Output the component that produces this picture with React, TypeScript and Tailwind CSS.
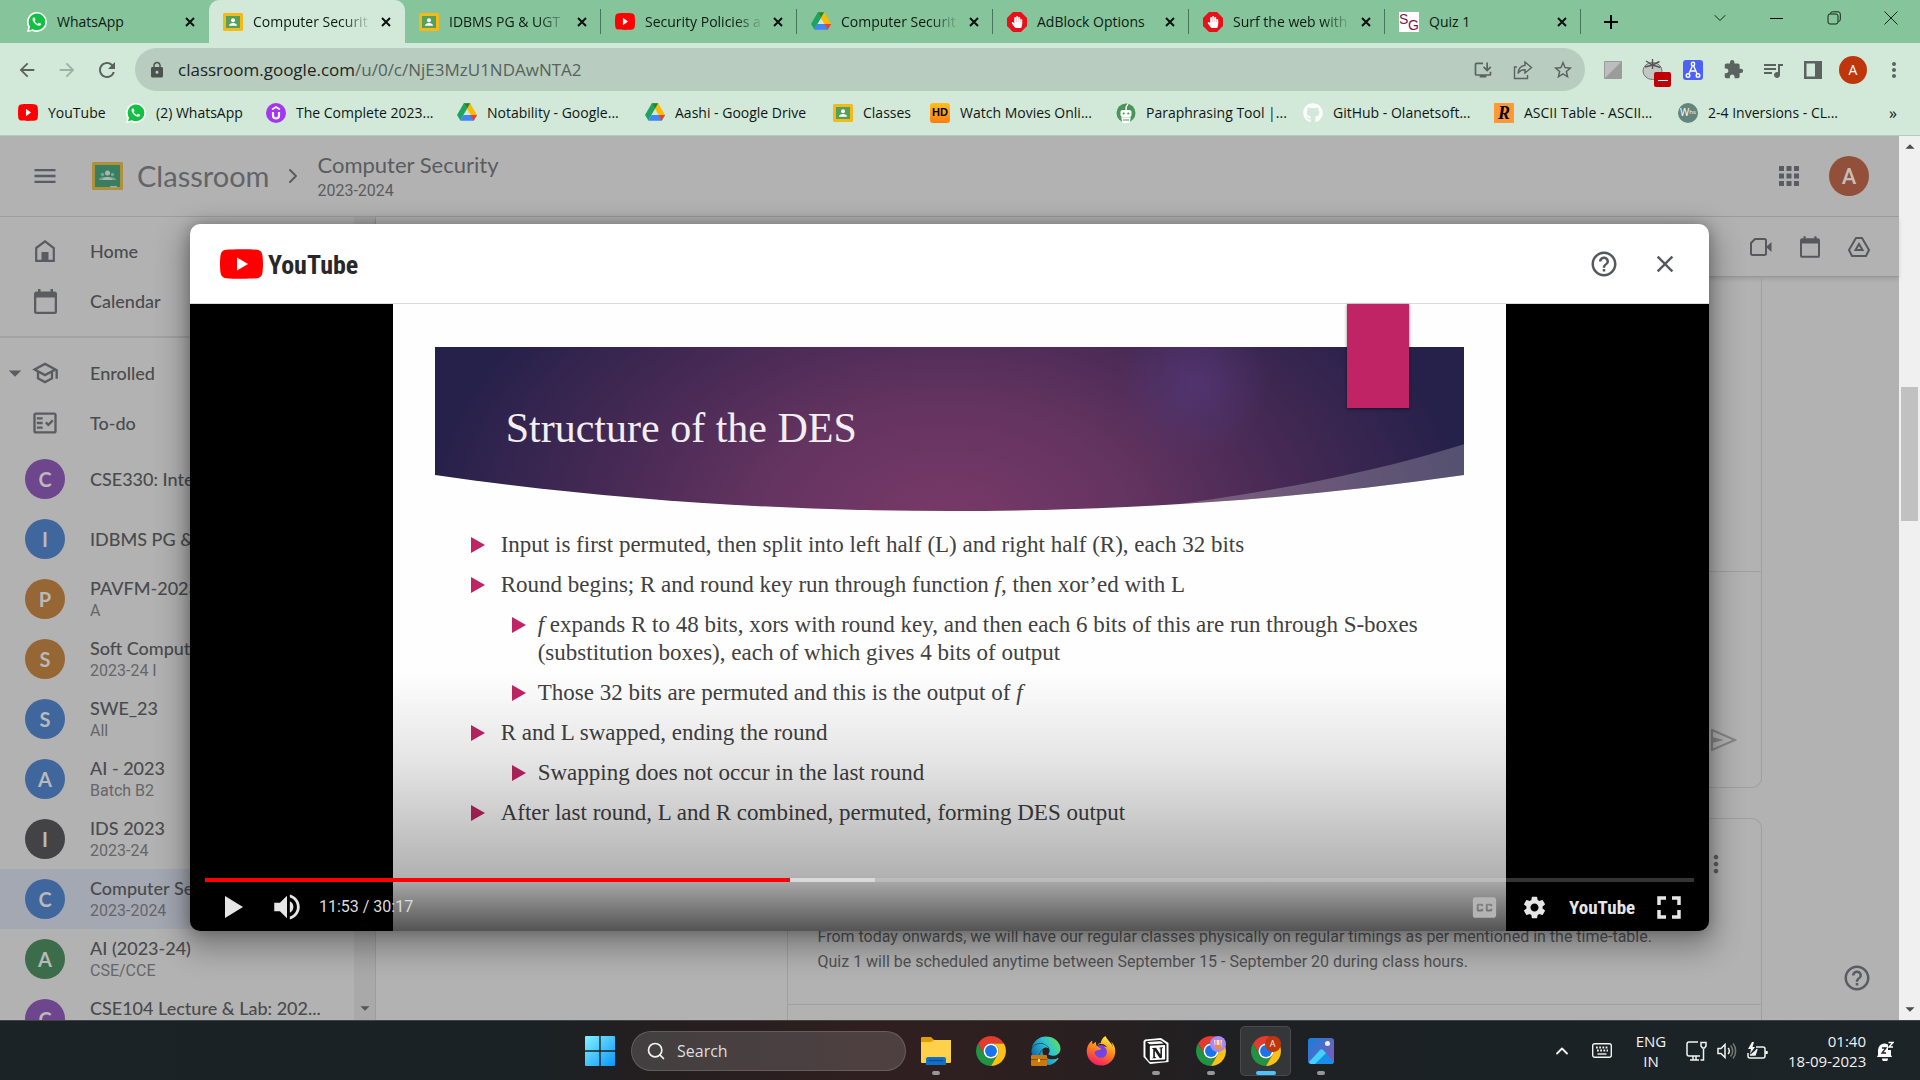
import React from "react";
import {
  MdMenu, MdApps, MdOutlineSchool, MdOutlineFactCheck, MdHelpOutline, MdClose, MdSettings,
  MdVolumeUp, MdClosedCaption, MdArrowBack, MdArrowForward, MdRefresh, MdLock,
  MdStarBorder, MdInstallDesktop, MdExtension, MdQueueMusic, MdMoreVert, MdArrowDropDown,
  MdArrowDropUp, MdAdd,
} from "react-icons/md";
import { FaFirefoxBrowser, FaEdge, FaGithub, FaHandPaper } from "react-icons/fa";
import { SiNotion } from "react-icons/si";
import { ChevronDown, ChevronUp, ChevronRight, Search } from "lucide-react";

const ui = "font-['Open_Sans','Noto_Sans',sans-serif]";
const gs = "font-[Lato,sans-serif]";

/* ---------- small logos ---------- */

function YouTubeMark({ className = "w-5 h-[17px]" }: { className?: string }) {
  return (
    <svg viewBox="0 0 43 30" preserveAspectRatio="none" className={className}>
      <path d="M6 .8C13 0 30 0 37 .8c3 .3 5 2.200 5.400 5.200.8 5 .8 13 0 18-.4 3-2.400 4.900-5.400 5.200-7 .8-24 .8-31 0-3-.3-5-2.200-5.400-5.200-.8-5-.8-13 0-18C1 3 3 1.100 6 .8Z" fill="#f00" />
      <path d="M17 8.500 28 15l-11 6.500Z" fill="#fff" />
    </svg>
  );
}

function WhatsApp() {
  return (
    <svg viewBox="0 0 20 20" className="size-5">
      <path d="M10 0a10 10 0 0 1 0 20c-1.700 0-3-.4-4.500-1.100L0 20l1.300-5A10 10 0 0 1 10 0Z" fill="#fff" />
      <path d="M10 1.500a8.400 8.400 0 0 1 0 16.800c-1.500 0-2.900-.4-4.200-1.100l-3.700 1 1-3.600A8.400 8.400 0 0 1 10 1.500Z" fill="#12c143" />
      <path d="M7 5.200c-.5 0-1.500.8-1.500 2.100 0 1.500 1.300 3.300 2.500 4.500 1.400 1.300 2.800 2 4.100 2 1.200 0 2.200-.9 2.200-1.700 0-.3-2-1.300-2.300-1.300-.4 0-.9 1.200-1.300 1.200-.5 0-3-2.200-3-2.900 0-.3.800-.9.800-1.300C8.500 7.400 7.600 5.200 7 5.200Z" fill="#fff" />
    </svg>
  );
}

function Drive() {
  return (
    <svg viewBox="0 0 24 22" className="h-[19px] w-5">
      <path d="M8.200 0h7.600L12 6.700 4 20.500 0 14Z" fill="#1ea362" />
      <path d="M8.200 0h7.600L24 14h-7.800Z" fill="#ffba00" />
      <path d="M8.200 0h7.600L12 6.600Z" fill="#0f8a48" />
      <path d="M7.800 14H24l-4 7H3.800Z" fill="#4285f4" />
      <path d="M16.200 14H24l-4 7Z" fill="#ea4335" />
      <path d="M7.800 14 12 7l4.200 7Z" className="fill-[#d2e8d9]" />
    </svg>
  );
}

function ClassroomIcon({ dim = false }: { dim?: boolean }) {
  if (dim)
    return (
      <svg viewBox="0 0 31 28" className="h-7 w-[31px]">
        <rect width="31" height="28" rx="1.500" fill="#b0913a" />
        <rect x="3" y="3" width="25" height="22" fill="#387f62" />
        <circle cx="15.500" cy="11" r="2.500" fill="#b2b2b2" />
        <circle cx="10.500" cy="12.500" r="1.700" fill="#7ba291" />
        <circle cx="20.500" cy="12.500" r="1.700" fill="#7ba291" />
        <path d="M7 18c0-3 5-3 8.500-3s8.500 0 8.500 3Z" fill="#7ba291" />
        <path d="M10.500 18c0-4 10-4 10 0Z" fill="#b2b2b2" />
        <path d="M18 24h7v1.500h-7Z" fill="#a9a9a9" />
      </svg>
    );
  return (
    <svg viewBox="0 0 20 18" className="h-[18px] w-5">
      <rect width="20" height="18" rx="1.500" fill="#f5ba15" />
      <rect x="3" y="3" width="14" height="12" fill="#57a05c" />
      <circle cx="10" cy="7.300" r="2" fill="#fff" />
      <path d="M6 12.700c0-3.600 8-3.600 8 0Z" fill="#fff" />
    </svg>
  );
}

function AdBlock() {
  return (
    <span className="relative flex size-5 items-center justify-center">
      <svg viewBox="0 0 20 20" className="size-5">
        <path d="M6 0h8l6 6v8l-6 6H6l-6-6V6Z" fill="#e8101a" />
      </svg>
      <FaHandPaper className="absolute size-3 text-white" />
    </span>
  );
}

function SG() {
  return (
    <span className="relative block size-5 bg-white font-['Liberation_Sans',sans-serif] text-[14px] leading-none text-[#7a1450]">
      <span className="absolute left-0 top-0">S</span>
      <span className="absolute bottom-0 right-0">G</span>
    </span>
  );
}

function Udemy() {
  return (
    <svg viewBox="0 0 20 20" className="size-5">
      <circle cx="10" cy="10" r="10" fill="#a435f0" />
      <path d="M6 6.500 10 4l4 2.500" stroke="#fff" strokeWidth="1.700" fill="none" />
      <path d="M7 9v3.500a3 3 0 0 0 6 0V9" stroke="#fff" strokeWidth="2.200" fill="none" />
    </svg>
  );
}

function Robot() {
  return (
    <svg viewBox="0 0 20 20" className="size-5">
      <circle cx="10" cy="10" r="9.500" fill="#499557" />
      <rect x="4.500" y="7" width="11" height="7" rx="2" fill="#fff" />
      <path d="M10 7V4l2-3M6 15h8l-1 5H7Z" stroke="#fff" strokeWidth="1.300" fill="#fff" />
      <circle cx="7.700" cy="10.500" r="1.100" fill="#499557" />
      <circle cx="12.300" cy="10.500" r="1.100" fill="#499557" />
      <path d="M7 17h6" stroke="#499557" />
    </svg>
  );
}

function Chrome() {
  return (
    <svg viewBox="0 0 48 48" className="size-[30px]">
      <path d="M24 12h20.780A24 24 0 0 0 3.220 12l10.390 18A12 12 0 0 1 24 12Z" fill="#e33b2e" />
      <path d="M13.610 30 3.220 12A24 24 0 0 0 24 48l10.390-18a12 12 0 0 1-20.780 0Z" fill="#229342" />
      <path d="M34.390 30 24 48a24 24 0 0 0 20.780-36H24a12 12 0 0 1 10.390 18Z" fill="#fbc116" />
      <circle cx="24" cy="24" r="12" fill="#fff" />
      <circle cx="24" cy="24" r="9.500" fill="#1a73e8" />
    </svg>
  );
}

/* ---------- browser chrome ---------- */

const tabs: { icon: React.ReactNode; label: string; active?: boolean; line?: boolean; fade?: boolean }[] = [
  { icon: <WhatsApp />, label: "WhatsApp" },
  { icon: <ClassroomIcon />, label: "Computer Securit", active: true, fade: true },
  { icon: <ClassroomIcon />, label: "IDBMS PG & UGT", line: true, fade: true },
  { icon: <YouTubeMark />, label: "Security Policies a", line: true, fade: true },
  { icon: <Drive />, label: "Computer Securit", line: true, fade: true },
  { icon: <AdBlock />, label: "AdBlock Options", line: true },
  { icon: <AdBlock />, label: "Surf the web with", line: true, fade: true },
  { icon: <SG />, label: "Quiz 1", line: true },
];

function TabStrip() {
  return (
    <div className="flex h-[43px] shrink-0 bg-[#86c49c] pl-[13px] text-[14px] text-[#0d1a12]">
      {tabs.map((t, i) => (
        <div
          key={i}
          className={
            t.active
              ? "relative flex w-[196px] items-center rounded-t-[10px] bg-[#d2e8d9] pl-[14px] pr-[9px]"
              : "relative flex w-[196px] items-center pl-[14px] pr-[9px]"
          }
        >
          {t.icon}
          <button
            className={
              t.fade
                ? "ml-[10px] min-w-0 flex-1 whitespace-nowrap text-left [mask-image:linear-gradient(to_right,black_75%,transparent)]"
                : "ml-[10px] min-w-0 flex-1 whitespace-nowrap text-left"
            }
          >
            {t.label}
          </button>
          <button aria-label="Close tab" className="ml-1 flex size-5 items-center justify-center">
            <svg viewBox="0 0 10 10" className="size-[10px]">
              <path d="m1 1 8 8M9 1 1 9" stroke="#0a0f0c" strokeWidth="1.900" />
            </svg>
          </button>
          {t.line && <span className="absolute right-0 top-[9px] h-[25px] w-px bg-[#46755a]" />}
        </div>
      ))}
      <button aria-label="New tab" className="ml-4 flex w-7 items-center justify-center">
        <MdAdd className="size-6 text-black" />
      </button>
      <div className="ml-auto flex h-9 text-[#16251b]">
        <button aria-label="Search tabs" className="flex w-[57px] items-center justify-center">
          <ChevronDown className="size-5" strokeWidth={1.2} />
        </button>
        <button aria-label="Minimize" className="flex w-[57px] items-center justify-center">
          <span className="h-px w-[13px] bg-black" />
        </button>
        <button aria-label="Restore" className="flex w-[57px] items-center justify-center">
          <svg viewBox="0 0 14 14" className="size-[14px]" fill="none" stroke="currentColor">
            <rect x="1" y="3" width="10" height="10" rx="2" />
            <path d="M3.500 3V2.500A2 2 0 0 1 5.500.8H11a2.300 2.300 0 0 1 2.300 2.300V8.500a2 2 0 0 1-1.800 2" />
          </svg>
        </button>
        <button aria-label="Close" className="flex w-[58px] items-center justify-center">
          <svg viewBox="0 0 14 14" className="size-[14px]" stroke="currentColor">
            <path d="m.5.5 13 13M13.500.5l-13 13" />
          </svg>
        </button>
      </div>
    </div>
  );
}

function Toolbar() {
  const ib = "flex w-10 items-center justify-center";
  return (
    <div className="flex h-[53px] shrink-0 items-center bg-[#d2e8d9] pl-[7px] text-[#5b6360]">
      <button aria-label="Back" className={ib}><MdArrowBack className="size-[22px]" /></button>
      <button aria-label="Forward" className={ib}><MdArrowForward className="size-[22px] text-[#9fafa6]" /></button>
      <button aria-label="Reload" className={ib}><MdRefresh className="size-6" /></button>
      <form className="ml-2 flex h-[43px] flex-1 items-center rounded-full bg-[#b8cdc0] pl-[13px] pr-[2px]">
        <MdLock className="size-[18px] text-[#4b5250]" />
        <div className="ml-3 flex-1 text-[17px]">
          <span className="text-[#1c2420]">classroom.google.com</span>
          <span className="text-[#56625b]">/u/0/c/NjE3MzU1NDAwNTA2</span>
        </div>
        <button type="button" aria-label="Install" className={ib}><MdInstallDesktop className="size-5" /></button>
        <button type="button" aria-label="Share" className={ib}>
          <svg viewBox="0 0 20 20" className="size-5" fill="none" stroke="currentColor" strokeWidth="1.400">
            <path d="M4 7H1.500v11.500h13V15M12 2l6.500 5.500L12 13V9.800c-3.500 0-5.500 1-7 3.700.3-4 2.500-7.500 7-8.200Z" />
          </svg>
        </button>
        <button type="button" aria-label="Bookmark" className={ib}><MdStarBorder className="size-[22px]" /></button>
      </form>
      <div className="flex items-center">
        <button aria-label="Extension" className="flex w-12 items-center justify-center pl-2">
          <svg viewBox="0 0 18 18" className="size-[18px]">
            <rect width="18" height="18" rx="1" fill="#9b9b9b" />
            <path d="M1 17V1h16Z" fill="#bdbdbd" />
          </svg>
        </button>
        <button aria-label="Tomato timer" className="relative flex w-10 items-center justify-center">
          <svg viewBox="0 0 22 22" className="size-[22px]">
            <ellipse cx="10.500" cy="12" rx="9.500" ry="8.500" fill="#c3c7c4" stroke="#777" />
            <path d="M10.500 6V0M10.500 6 4 2M10.500 6l7-3.500M10.500 6 3 8M10.500 6l8 2.500M10.500 6v4" stroke="#555" strokeWidth="1.400" />
          </svg>
          <span className="absolute -bottom-[6px] right-[2px] flex h-[15px] w-[17px] items-center justify-center rounded-[2px] bg-[#bf0007]">
            <span className="mt-[3px] h-px w-[10px] bg-white" />
          </span>
        </button>
        <button aria-label="Mercury" className={ib}>
          <svg viewBox="0 0 20 20" className="size-5">
            <rect width="20" height="20" rx="3" fill="#4c62f5" />
            <g fill="none" stroke="#fff" strokeWidth="1.400">
              <circle cx="10" cy="4" r="1.700" /><circle cx="5" cy="15.500" r="1.800" /><circle cx="15" cy="15.500" r="1.800" />
              <path d="M9.400 5.700 6 13.800M10.600 5.700l3.400 8.100M7 11h6" />
            </g>
          </svg>
        </button>
        <button aria-label="Extensions" className={ib}><MdExtension className="size-[21px]" /></button>
        <button aria-label="Media" className={ib}><MdQueueMusic className="size-6" /></button>
        <button aria-label="Side panel" className={ib}>
          <svg viewBox="0 0 18 18" className="size-[18px]">
            <path fillRule="evenodd" d="M0 0h18v18H0Zm2.500 2.500v13H11v-13Z" fill="currentColor" />
          </svg>
        </button>
        <button aria-label="Profile" className="ml-[6px] flex size-7 items-center justify-center rounded-full bg-[#bf360c] text-[14px] text-white">A</button>
        <button aria-label="Menu" className="flex w-[53px] items-center justify-center"><MdMoreVert className="size-6" /></button>
      </div>
    </div>
  );
}

const bookmarks: { icon: React.ReactNode; label: string; w: string }[] = [
  { icon: <YouTubeMark />, label: "YouTube", w: "w-[108px]" },
  { icon: <WhatsApp />, label: "(2) WhatsApp", w: "w-[140px]" },
  { icon: <Udemy />, label: "The Complete 2023...", w: "w-[191px]" },
  { icon: <Drive />, label: "Notability - Google...", w: "w-[188px]" },
  { icon: <Drive />, label: "Aashi - Google Drive", w: "w-[188px]" },
  { icon: <ClassroomIcon />, label: "Classes", w: "w-[97px]" },
  {
    icon: <span className="flex h-5 w-5 items-center justify-center rounded-[3px] bg-gradient-to-b from-[#ffc01c] to-[#ff7a12] font-['Liberation_Sans',sans-serif] text-[11px] font-bold text-black">HD</span>,
    label: "Watch Movies Onli...", w: "w-[186px]",
  },
  { icon: <Robot />, label: "Paraphrasing Tool |...", w: "w-[187px]" },
  { icon: <FaGithub className="size-5 text-white" />, label: "GitHub - Olanetsoft...", w: "w-[191px]" },
  {
    icon: <span className="flex size-5 items-center justify-center bg-[#ff9933] font-['Liberation_Serif',serif] text-[18px] font-bold italic leading-none text-black">R</span>,
    label: "ASCII Table - ASCII...", w: "w-[184px]",
  },
  {
    icon: <span className="flex size-5 items-center justify-center rounded-full bg-[#64857c] text-[10px] text-white">W<span className="text-[6px]">hs</span></span>,
    label: "2-4 Inversions - CL...", w: "w-[170px]",
  },
];

function BookmarksBar() {
  return (
    <div className="flex h-[40px] shrink-0 items-center border-b border-[#b5c9bc] bg-[#d2e8d9] pb-[6px] pl-[18px] text-[14px] text-[#101713]">
      {bookmarks.map((b) => (
        <a key={b.label} href="#" className={`flex shrink-0 items-center gap-[10px] whitespace-nowrap ${b.w}`}>
          <span className="flex w-5 shrink-0 justify-center">{b.icon}</span>
          {b.label}
        </a>
      ))}
      <button aria-label="More bookmarks" className="ml-auto mr-[23px] text-[16px]">»</button>
    </div>
  );
}

/* ---------- classroom page ---------- */

function Header() {
  return (
    <header className="flex h-[81px] shrink-0 items-center border-b border-[#9d9d9d] pl-[31px] text-[#5a5c60]">
      <button aria-label="Main menu"><MdMenu className="size-7" /></button>
      <span className="ml-[33px]"><ClassroomIcon dim /></span>
      <a href="#" className={`ml-[14px] text-[29px] text-[#626467] ${gs}`}>Classroom</a>
      <ChevronRight className="ml-3 size-6" strokeWidth={2} />
      <div className="ml-3 pt-px">
        <h1 className={`text-[22px] leading-7 ${gs}`}>Computer Security</h1>
        <p className="font-[Roboto,sans-serif] text-[16px] leading-6">2023-2024</p>
      </div>
      <button aria-label="Google apps" className="ml-auto mr-[25px]"><MdApps className="size-[30px]" /></button>
      <button aria-label="Account" className="mr-[30px] flex size-10 items-center justify-center rounded-full bg-[#924f3a] font-[Roboto,sans-serif] text-[22px] font-medium text-[#c9bdb9]">A</button>
    </header>
  );
}

const courses = [
  { l: "C", c: "bg-[#6d468e]", name: "CSE330: Internet of Things", sub: "" },
  { l: "I", c: "bg-[#40669e]", name: "IDBMS PG & UGT", sub: "" },
  { l: "P", c: "bg-[#966634]", name: "PAVFM-2023-24", sub: "A" },
  { l: "S", c: "bg-[#966634]", name: "Soft Computing", sub: "2023-24 I" },
  { l: "S", c: "bg-[#40669e]", name: "SWE_23", sub: "All" },
  { l: "A", c: "bg-[#40669e]", name: "AI - 2023", sub: "Batch B2" },
  { l: "I", c: "bg-[#434345]", name: "IDS 2023", sub: "2023-24" },
  { l: "C", c: "bg-[#40669e]", name: "Computer Security", sub: "2023-2024", active: true },
  { l: "A", c: "bg-[#3d6c4b]", name: "AI (2023-24)", sub: "CSE/CCE" },
  { l: "C", c: "bg-[#6d468e]", name: "CSE104 Lecture & Lab: 202...", sub: "" },
];

function HomeIcon() {
  return (
    <svg viewBox="0 0 20 22" className="h-[22px] w-5">
      <path d="M1.200 8 10 1.300 18.800 8v12.800H1.200Z" fill="none" stroke="currentColor" strokeWidth="2.200" />
      <path d="M6.500 12h7v9h-7Z" fill="currentColor" />
    </svg>
  );
}

function CalendarIcon({ className = "h-[25px] w-[23px]" }: { className?: string }) {
  return (
    <svg viewBox="0 0 23 25" className={className}>
      <path fillRule="evenodd" d="M4 0h2.500v2.500h10V0H19v2.500h1.500A2.500 2.500 0 0 1 23 5v17.500a2.500 2.500 0 0 1-2.500 2.500h-18A2.500 2.500 0 0 1 0 22.500V5a2.500 2.500 0 0 1 2.500-2.500H4ZM2.300 8.500v14.200h18.400V8.500Z" fill="currentColor" />
    </svg>
  );
}

function NavRow({ icon, label, arrow }: { icon: React.ReactNode; label: string; arrow?: boolean }) {
  return (
    <a href="#" className="relative flex h-[50px] items-center pl-[31px]">
      {arrow && <MdArrowDropDown className="absolute left-0 size-[30px] text-[#5a5c60]" />}
      <span className="flex w-7 justify-center text-[#5a5c60]">{icon}</span>
      <span className="ml-[31px]">{label}</span>
    </a>
  );
}

function Sidebar() {
  return (
    <div className="flex w-[376px] shrink-0 overflow-hidden border-r border-[#9d9d9d]">
      <nav className={`w-[354px] pt-[9px] text-[18px] font-medium text-[#4a4b4d] ${gs}`}>
        <NavRow icon={<HomeIcon />} label="Home" />
        <NavRow icon={<CalendarIcon />} label="Calendar" />
        <div className="my-[10px] h-[2px] bg-[#a2a2a2]" />
        <NavRow icon={<MdOutlineSchool className="size-[30px]" />} label="Enrolled" arrow />
        <NavRow icon={<MdOutlineFactCheck className="size-7" />} label="To-do" />
        <div className="pt-px">
          {courses.map((c, i) => (
            <a
              key={i}
              href="#"
              className={c.active ? "flex h-[60px] items-center bg-[#a4a8b2] pl-[25px]" : "flex h-[60px] items-center pl-[25px]"}
            >
              <span className={`flex size-10 shrink-0 items-center justify-center rounded-full text-[20px] font-bold text-[#b9b9b9] ${c.c}`}>{c.l}</span>
              <span className="ml-[25px] min-w-0">
                <span className="block truncate leading-6">{c.name}</span>
                {c.sub && (
                  <span className="block font-[Roboto,sans-serif] text-[16px] font-normal leading-[22px] text-[#646669]">{c.sub}</span>
                )}
                {i === 9 && <span className="block h-[22px]" />}
              </span>
            </a>
          ))}
        </div>
      </nav>
      <div className="flex w-[21px] flex-col items-center justify-end bg-[#a9a9a9]">
        <MdArrowDropDown className="mb-px size-[22px] text-[#565656]" />
      </div>
    </div>
  );
}

function DriveOutline() {
  return (
    <svg viewBox="0 0 22 20" className="h-5 w-[22px]" fill="none" stroke="currentColor" strokeWidth="2">
      <path d="M8 1h6l7 12-3 6H4l-3-6Z" strokeLinejoin="round" />
      <path d="m11 7 3.500 6h-7Z" />
    </svg>
  );
}

function Meet() {
  return (
    <svg viewBox="0 0 22 18" className="h-[18px] w-[22px]">
      <path d="M5 1h9.500A1.500 1.500 0 0 1 16 2.500v13a1.500 1.500 0 0 1-1.500 1.500h-12A1.500 1.500 0 0 1 1 15.500V5Z" fill="none" stroke="currentColor" strokeWidth="2" />
      <path d="m16 9 5.500-5v10Z" fill="currentColor" />
    </svg>
  );
}

function Stream() {
  return (
    <div className="flex min-w-0 flex-1 flex-col">
      <div className="flex h-[60px] shrink-0 items-center justify-end gap-7 border-b border-[#999] pr-[29px] text-[#56585c] shadow-[0_2px_4px_rgba(0,0,0,0.12)]">
        <button aria-label="Meet"><Meet /></button>
        <button aria-label="Calendar"><CalendarIcon className="h-[22px] w-[20px]" /></button>
        <button aria-label="Class Drive folder"><DriveOutline /></button>
      </div>
      <div className="mx-auto flex w-full min-h-0 max-w-[1248px] flex-1 gap-6 overflow-hidden font-[Roboto,sans-serif]">
        <div className="w-[249px] shrink-0" />
        <div className="min-w-0 flex-1">
          <section className="rounded-b-[10px] border border-t-0 border-[#9f9f9f]">
            <div className="h-[295px] border-b border-[#9f9f9f]" />
            <div className="flex h-[215px] items-end justify-end pb-9 pr-6">
              <button aria-label="Post comment">
                <svg viewBox="0 0 26 22" className="h-[22px] w-[26px]">
                  <path d="M1 1 24 11 1 21Z" fill="none" stroke="#858585" strokeWidth="2" />
                  <path d="M1 8 13 11 1 14Z" fill="#858585" />
                </svg>
              </button>
            </div>
          </section>
          <section className="mt-[30px] rounded-t-[10px] border border-b-0 border-[#9f9f9f]">
            <div className="flex justify-end pr-[31px] pt-[31px]">
              <button aria-label="Post options"><MdMoreVert className="size-7 text-[#5a5c60]" /></button>
            </div>
            <p className="pb-[30px] pl-[30px] pt-[46px] text-[16px] leading-[25px] text-[#505153]">
              From today onwards, we will have our regular classes physically on regular timings as per mentioned in the time-table.
              <br />
              Quiz 1 will be scheduled anytime between September 15 - September 20 during class hours.
            </p>
            <div className="h-20 border-t border-[#9f9f9f]" />
          </section>
        </div>
      </div>
    </div>
  );
}

/* ---------- video dialog ---------- */

const wordmark = "font-['Roboto_Condensed','Liberation_Sans_Narrow','Open_Sans_Condensed',sans-serif] font-bold";

function Bullet({ sub, children }: { sub?: boolean; children: React.ReactNode }) {
  return (
    <li className={sub ? "flex pl-[41px]" : "flex"}>
      <svg viewBox="0 0 14 16" className="mt-[6px] h-4 w-[14px] shrink-0">
        <path d="M0 0 14 8 0 16Z" fill="#c02465" />
      </svg>
      <span className={sub ? "ml-[12px]" : "ml-[16px]"}>{children}</span>
    </li>
  );
}

function Slide() {
  return (
    <div className="relative mx-auto aspect-video h-full bg-[#fefefe] font-['Liberation_Serif',serif]">
      <div className="px-[42px] pt-[43px]">
        <div className="relative h-[164px]">
          <svg viewBox="0 0 1028 164" preserveAspectRatio="none" className="absolute inset-0 h-full w-full">
            <defs>
              <radialGradient id="banner" gradientUnits="userSpaceOnUse" cx="0" cy="0" r="1" gradientTransform="translate(510 175) scale(520 330)">
                <stop offset="0" stopColor="#783968" />
                <stop offset="0.350" stopColor="#653460" />
                <stop offset="0.650" stopColor="#472a55" />
                <stop offset="1" stopColor="#26214a" />
              </radialGradient>
              <radialGradient id="glow">
                <stop offset="0" stopColor="#54387a" stopOpacity="0.700" />
                <stop offset="1" stopColor="#54387a" stopOpacity="0" />
              </radialGradient>
              <clipPath id="shape"><path d="M0 0H1028V128C700 176 330 176 0 128Z" /></clipPath>
            </defs>
            <g clipPath="url(#shape)">
              <rect width="1028" height="164" fill="url(#banner)" />
              <circle cx="758" cy="36" r="75" fill="url(#glow)" />
              <path d="M720 160C820 147 930 128 1028 97V164H720Z" fill="#fff" opacity="0.220" />
            </g>
          </svg>
          <h2 className="relative pl-[71px] pt-[56px] text-[42px] leading-[50px] text-[#f3eef2]">Structure of the DES</h2>
        </div>
        <ul className="mt-[20px] flex flex-col gap-3 pl-9 text-[23px] leading-[28px] text-[#404040]">
          <Bullet>Input is first permuted, then split into left half (L) and right half (R), each 32 bits</Bullet>
          <Bullet>Round begins; R and round key run through function <i>f</i>, then xor’ed with L</Bullet>
          <Bullet sub>
            <i>f</i> expands R to 48 bits, xors with round key, and then each 6 bits of this are run through S-boxes
            <br />
            (substitution boxes), each of which gives 4 bits of output
          </Bullet>
          <Bullet sub>Those 32 bits are permuted and this is the output of <i>f</i></Bullet>
          <Bullet>R and L swapped, ending the round</Bullet>
          <Bullet sub>Swapping does not occur in the last round</Bullet>
          <Bullet>After last round, L and R combined, permuted, forming DES output</Bullet>
        </ul>
      </div>
      <div className="absolute right-[97px] top-0 h-[104px] w-[62px] bg-[#c02465] shadow-[0_1px_3px_rgba(0,0,0,0.5)]" />
    </div>
  );
}

function VideoDialog() {
  const cb = "flex items-center justify-center";
  return (
    <div role="dialog" aria-label="YouTube video" className="flex h-4/5 w-4/5 flex-col overflow-hidden rounded-[10px] bg-white shadow-[0_12px_30px_6px_rgba(0,0,0,0.3),0_0_14px_rgba(0,0,0,0.25)]">
      <div className="flex h-20 shrink-0 items-center border-b border-[#dadada] px-[30px] text-[#55585d]">
        <YouTubeMark className="h-[30px] w-[43px]" />
        <span className={`ml-[5px] pt-[3px] text-[26px] leading-none text-[#282828] ${wordmark}`}>YouTube</span>
        <button aria-label="Help" className="ml-auto mr-8"><MdHelpOutline className="size-[30px]" /></button>
        <button aria-label="Close"><MdClose className="size-7" /></button>
      </div>
      <div className="relative min-h-0 flex-1 bg-black">
        <Slide />
        <div className="absolute inset-x-0 bottom-0 flex h-[260px] flex-col justify-end bg-[linear-gradient(to_bottom,transparent,rgba(0,0,0,0.1)_35%,rgba(0,0,0,0.3)_79%,rgba(0,0,0,0.34)_81%,rgba(0,0,0,0.67))]">
          <div className="relative mx-[15px] h-1 bg-white/20">
            <div className="absolute inset-y-0 left-0 w-[45%] bg-white/45" />
            <div className="absolute inset-y-0 left-0 w-[39.3%] bg-[#f00]" />
          </div>
          <div className="flex h-[49px] items-center px-[22px] pt-[2px] text-[#e6e6e6]">
            <button aria-label="Play" className={`${cb} ml-px w-[42px]`}>
              <svg viewBox="0 0 18 22" className="h-[22px] w-[18px]"><path d="M0 0 18 11 0 22Z" fill="currentColor" /></svg>
            </button>
            <button aria-label="Mute" className={`${cb} ml-[14px] w-9`}><MdVolumeUp className="size-[34px]" /></button>
            <span className="ml-[14px] font-[Roboto,sans-serif] text-[16px] text-[#dcdcdc]">11:53 / 30:17</span>
            <button aria-label="Captions" className={`${cb} ml-auto w-9 text-[#b4b4b4]`}><MdClosedCaption className="size-[31px]" /></button>
            <button aria-label="Settings" className={`${cb} ml-[14px] w-9`}><MdSettings className="size-[27px]" /></button>
            <a href="#" className={`ml-[17px] w-[66px] text-[19px] leading-none ${wordmark}`}>YouTube</a>
            <button aria-label="Full screen" className={`${cb} ml-4 w-9`}>
              <svg viewBox="0 0 24 23" className="h-[23px] w-6" fill="none" stroke="currentColor" strokeWidth="3.500">
                <path d="M2 9V2h7M15 2h7v7M22 14v7h-7M9 21H2v-7" />
              </svg>
            </button>
          </div>
        </div>
      </div>
    </div>
  );
}

/* ---------- taskbar ---------- */

function TaskIcon({ label, mark, active, children }: { label: string; mark?: boolean; active?: boolean; children: React.ReactNode }) {
  return (
    <button
      aria-label={label}
      className={
        active
          ? "relative mx-[2px] flex h-[50px] w-[51px] items-center justify-center rounded-[5px] border border-white/10 bg-white/10"
          : "relative flex h-[50px] w-[55px] items-center justify-center"
      }
    >
      <span className="relative flex">{children}</span>
      {mark && <span className="absolute bottom-px h-1 w-2 rounded-full bg-[#979797]" />}
      {active && <span className="absolute bottom-0 h-1 w-5 rounded-full bg-[#4cc2ff]" />}
    </button>
  );
}

function Taskbar() {
  return (
    <footer className="relative flex h-[60px] shrink-0 items-center border-t border-[#3e4344] bg-[#1c2225] bg-[linear-gradient(to_right,#1b2326_0%,#1b2225_28%,#241e1f_34%,#301f20_46%,#2b1f20_55%,#1f2022_64%,#1b2225_75%,#1c2427_100%)] text-[#f2f2f2]">
      <svg className="absolute size-0" aria-hidden="true">
        <defs>
          <linearGradient id="fx" x1="0.700" y1="0" x2="0.300" y2="1">
            <stop offset="0" stopColor="#fff044" /><stop offset="0.450" stopColor="#ff8a16" /><stop offset="1" stopColor="#f5156c" />
          </linearGradient>
          <linearGradient id="edge" x1="1" y1="0.200" x2="0" y2="0.800">
            <stop offset="0" stopColor="#5fe05a" /><stop offset="0.400" stopColor="#2cc3d6" /><stop offset="1" stopColor="#0c59a4" />
          </linearGradient>
        </defs>
      </svg>
      <div className="ml-[585px] flex items-center">
        <button aria-label="Start">
          <svg viewBox="0 0 30 30" className="size-[30px]">
            <defs>
              <linearGradient id="win" x1="0" y1="0" x2="1" y2="1"><stop offset="0" stopColor="#84f0ff" /><stop offset="1" stopColor="#0a96fa" /></linearGradient>
            </defs>
            <path d="M1 0h13.300v14.300H0V1a1 1 0 0 1 1-1ZM15.700 0H29a1 1 0 0 1 1 1v13.300H15.700ZM0 15.700h14.300V30H1a1 1 0 0 1-1-1ZM15.700 15.700H30V29a1 1 0 0 1-1 1H15.700Z" fill="url(#win)" />
          </svg>
        </button>
        <label className="ml-4 flex h-10 w-[275px] items-center rounded-full border border-white/15 bg-white/15 pl-[14px]">
          <Search className="size-5" strokeWidth={2} />
          <input aria-label="Search" placeholder="Search" className="ml-[11px] w-40 bg-transparent text-[16px] placeholder-[#dedede] outline-none" />
        </label>
        <div className="ml-[2px] flex items-center">
          <TaskIcon label="File Explorer" mark>
            <svg viewBox="0 0 30 28" className="h-7 w-[30px]">
              <path d="M0 1a1 1 0 0 1 1-1h9l3 3v5H0Z" fill="#e29d00" />
              <path d="M0 5h10l3-2h17v22a1 1 0 0 1-1 1H1a1 1 0 0 1-1-1Z" fill="#ffd04a" />
              <path d="M5 28v-6a2 2 0 0 1 2-2h16a2 2 0 0 1 2 2v6Z" fill="#0f6fc9" />
              <path d="M8 23.500h14" stroke="#0a4c94" strokeWidth="1.200" />
            </svg>
          </TaskIcon>
          <TaskIcon label="Chrome"><Chrome /></TaskIcon>
          <TaskIcon label="Edge">
            <FaEdge className="size-[30px] fill-[url(#edge)]" />
            <svg viewBox="0 0 16 12" className="absolute bottom-0 left-0 h-3 w-4">
              <rect y="1" width="16" height="11" rx="1" fill="#c87a10" /><path d="M0 5.500h16" stroke="#8a4a00" /><rect x="7" y="5" width="2" height="3" fill="#ffd65a" />
            </svg>
          </TaskIcon>
          <TaskIcon label="Firefox">
            <span className="absolute left-[7px] top-[9px] size-4 rounded-full bg-[#7542e5]" />
            <FaFirefoxBrowser className="relative size-[30px] fill-[url(#fx)]" />
          </TaskIcon>
          <TaskIcon label="Notion" mark>
            <svg viewBox="0 0 26 26" className="size-[26px]">
              <path d="M2 1.500 18 0l7.500 5v19L7 26 .5 19V3Z" fill="#fff" />
            </svg>
            <SiNotion className="absolute left-[2px] top-[2px] size-[22px] text-[#1b1b1b]" />
          </TaskIcon>
          <TaskIcon label="Chrome profile" mark>
            <Chrome />
            <svg viewBox="0 0 16 16" className="absolute right-0 top-0 size-4">
              <circle cx="8" cy="8" r="8" fill="#a98af5" /><path d="M4 4h8l-1 8H5Z" fill="#f6e3e0" /><path d="M6 4v6M10 4v6" stroke="#e36a50" /><path d="M5 9h6v4H5Z" fill="#f08a3c" />
            </svg>
          </TaskIcon>
          <TaskIcon label="Chrome profile A" active>
            <Chrome />
            <span className="absolute right-0 top-0 flex size-4 items-center justify-center rounded-full bg-[#bf360c] text-[9px]">A</span>
          </TaskIcon>
          <TaskIcon label="Photos" mark>
            <svg viewBox="0 0 26 26" className="size-[26px]">
              <defs>
                <linearGradient id="ph" x1="0" y1="0" x2="1" y2="0.800"><stop offset="0" stopColor="#1381dd" /><stop offset="1" stopColor="#8358b8" /></linearGradient>
              </defs>
              <rect width="26" height="26" rx="3" fill="url(#ph)" />
              <path d="m1 24 11-12a2 2 0 0 1 3 0l11 12a3 3 0 0 1-3 2H4a3 3 0 0 1-3-2Z" fill="#1a8fe8" />
              <path d="m1 24 11-12a2 2 0 0 1 3 0l3 3L7 26H4a3 3 0 0 1-3-2Z" fill="#45d0fb" />
              <circle cx="19.500" cy="5.500" r="2.500" fill="#f1f1f1" />
            </svg>
          </TaskIcon>
        </div>
      </div>
      <div className="ml-auto flex items-center pr-[26px] text-[15px] leading-5">
        <button aria-label="Hidden icons" className="mr-5"><ChevronUp className="size-5" strokeWidth={2.2} /></button>
        <svg viewBox="0 0 20 15" className="h-[15px] w-5" fill="none" stroke="currentColor" strokeWidth="1.400">
          <rect x=".7" y=".7" width="18.600" height="13.600" rx="2" />
          <path d="M4 4.500h12M5 7.500h11" strokeDasharray="1.800 1.400" strokeWidth="1.800" />
          <path d="M5.500 11h9" />
        </svg>
        <button className="ml-[21px] w-9 text-center">ENG<br />IN</button>
        <div className="ml-[17px] flex items-center gap-[10px]">
          <svg viewBox="0 0 21 20" className="h-5 w-[21px]" fill="none" stroke="currentColor" strokeWidth="1.500">
            <path d="M12 1H3a2 2 0 0 0-2 2v10a2 2 0 0 0 2 2h11M4 19h9M7 15v4M10 15v4M17.500 8v11h-3" />
            <path d="M15 1.500h5V5l-1.500 2h-2L15 5Z" />
          </svg>
          <svg viewBox="0 0 20 18" className="h-[18px] w-5" fill="none" stroke="currentColor" strokeWidth="1.500">
            <path d="M1 6.500v5h3l4 4v-13l-4 4Z" /><path d="M11 6a4 4 0 0 1 0 6" /><path d="M13.500 3.500a8 8 0 0 1 0 11M16 1.500c3.500 4 3.500 11 0 15" stroke="#777" />
          </svg>
          <svg viewBox="0 0 21 18" className="h-[18px] w-[21px]" fill="none" stroke="currentColor" strokeWidth="1.500">
            <path d="M9 5h7a2 2 0 0 1 2 2v7a2 2 0 0 1-2 2H3a2 2 0 0 1-2-2v-3" /><path d="M19.500 9v3" strokeWidth="2.500" />
            <path d="M5 0 1 7h3l-1 5 5-7H5.500L7 0Z" fill="currentColor" stroke="none" /><path d="M3 13h5l2-6" fill="currentColor" />
          </svg>
        </div>
        <div className="ml-5 w-[78px] whitespace-nowrap text-right">01:40<br />18-09-2023</div>
        <svg viewBox="0 0 18 20" className="ml-[10px] h-5 w-[18px]">
          <path d="M2 14V9a6.500 6.500 0 0 1 7-6.500l3 1V9h3v5l1 2H1Z" fill="#fff" /><path d="M6 17.500a3 3 0 0 0 6 0Z" fill="#fff" />
          <path d="M6 7h4l-4 5h4" stroke="#1c2225" strokeWidth="1.300" fill="none" /><path d="M12.500 1.500H17l-4 4.500h4" stroke="#fff" strokeWidth="1.400" fill="none" />
        </svg>
      </div>
    </footer>
  );
}

export default function App() {
  return (
    <div className={`flex h-screen w-full flex-col overflow-hidden ${ui}`}>
      <TabStrip />
      <Toolbar />
      <BookmarksBar />
      <div className="flex min-h-0 flex-1">
        <div className="relative flex min-w-0 flex-1 flex-col bg-[#b2b2b2]">
          <Header />
          <div className="flex min-h-0 flex-1">
            <Sidebar />
            <Stream />
          </div>
          <button aria-label="Help" className="absolute bottom-[27px] right-[27px] text-[#5a5c60]">
            <MdHelpOutline className="size-[30px]" />
          </button>
          <div className="absolute inset-0 flex items-center justify-center pb-px">
            <VideoDialog />
          </div>
        </div>
        <div className="flex w-[21px] shrink-0 flex-col items-center bg-[#f0f0f0] text-[#4d4d4d]">
          <MdArrowDropUp className="size-[22px]" />
          <div className="mt-[229px] h-[134px] w-[17px] bg-[#c1c1c1]" />
          <MdArrowDropDown className="mt-auto size-[22px]" />
        </div>
      </div>
      <Taskbar />
    </div>
  );
}
